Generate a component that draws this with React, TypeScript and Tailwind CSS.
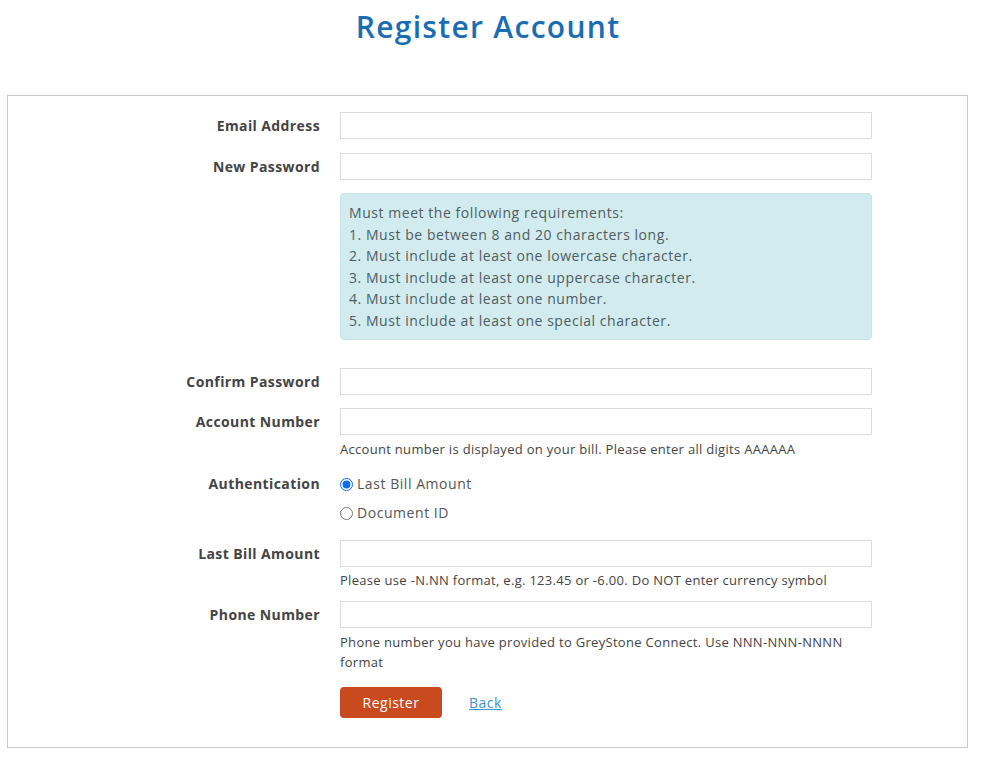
import { useState } from 'react'

const font = { fontFamily: '"Open Sans", "Liberation Sans", sans-serif' }

function Field({
  label,
  className = '',
  children,
}: {
  label?: string
  className?: string
  children: React.ReactNode
}) {
  return (
    <div className={`flex ${className}`}>
      <div className="w-[312px] shrink-0 text-right text-[14px] font-bold leading-[27px] tracking-[0.4px] text-[#444]">
        {label}
      </div>
      <div className="ml-[20px] w-[532px]">{children}</div>
    </div>
  )
}

function TextInput({ type = 'text' }: { type?: string }) {
  return (
    <input
      type={type}
      className="block h-[27px] w-[532px] border border-[#dcdcdc] bg-white px-2 text-[14px] outline-none"
    />
  )
}

function Help({ children, className = '' }: { children: React.ReactNode; className?: string }) {
  return (
    <p className={`text-[13px] leading-[20px] tracking-[0.3px] text-[#444] ${className}`}>
      {children}
    </p>
  )
}

export default function App() {
  const [auth, setAuth] = useState('bill')

  return (
    <div className="min-h-screen bg-white text-[#444]" style={font}>
      <h1 className="w-[976px] pt-[8px] text-center text-[30px] font-semibold leading-[38px] tracking-[1.3px] text-[#1a6db4]">
        Register Account
      </h1>

      <div className="ml-[7px] mt-[49px] w-[961px] border border-[#c8c8c8] pt-[16px] pb-[29px]">
        <Field label="Email Address">
          <TextInput type="email" />
        </Field>

        <Field label="New Password" className="mt-[14px]">
          <TextInput type="password" />
          <div className="mt-[13px] rounded-[4px] border border-[#c6e5ea] bg-[#d1ebef] px-[8px] py-[8px] text-[14px] leading-[21.5px] tracking-[0.55px] text-[#4f5d60]">
            <p>Must meet the following requirements:</p>
            <p>1. Must be between 8 and 20 characters long.</p>
            <p>2. Must include at least one lowercase character.</p>
            <p>3. Must include at least one uppercase character.</p>
            <p>4. Must include at least one number.</p>
            <p>5. Must include at least one special character.</p>
          </div>
        </Field>

        <Field label="Confirm Password" className="mt-[28px]">
          <TextInput type="password" />
        </Field>

        <Field label="Account Number" className="mt-[13px]">
          <TextInput />
          <Help className="mt-[4px]">
            Account number is displayed on your bill. Please enter all digits AAAAAA
          </Help>
        </Field>

        <div className="mt-[15px] flex">
          <div className="w-[312px] shrink-0 text-right text-[14px] font-bold leading-[20px] tracking-[0.4px] text-[#444]">
            Authentication
          </div>
          <div className="ml-[20px] flex flex-col gap-[9px] text-[14px] leading-[20px] tracking-[0.55px] text-[#555]">
            <label className="flex items-center gap-[4px]">
              <input
                type="radio"
                name="auth"
                checked={auth === 'bill'}
                onChange={() => setAuth('bill')}
                className="m-0 h-[13px] w-[13px] accent-[#0b6ef0]"
              />
              Last Bill Amount
            </label>
            <label className="flex items-center gap-[4px]">
              <input
                type="radio"
                name="auth"
                checked={auth === 'doc'}
                onChange={() => setAuth('doc')}
                className="m-0 h-[13px] w-[13px] accent-[#0b6ef0]"
              />
              Document ID
            </label>
          </div>
        </div>

        <Field label="Last Bill Amount" className="mt-[17px]">
          <TextInput />
          <Help className="mt-[3px] tracking-[0.2px]">
            Please use -N.NN format, e.g. 123.45 or -6.00. Do NOT enter currency symbol
          </Help>
        </Field>

        <Field label="Phone Number" className="mt-[11px]">
          <TextInput type="tel" />
          <Help className="mt-[4px]">
            Phone number you have provided to GreyStone Connect. Use NNN-NNN-NNNN format
          </Help>
        </Field>

        <Field className="mt-[15px]">
          <div className="flex items-center">
            <button className="h-[31px] w-[102px] rounded-[4px] bg-[#c94a1e] text-[14px] tracking-[0.5px] text-white">
              Register
            </button>
            <a href="#" className="ml-[27px] text-[14px] tracking-[0.5px] text-[#3f8fcf] underline">
              Back
            </a>
          </div>
        </Field>
      </div>
    </div>
  )
}
